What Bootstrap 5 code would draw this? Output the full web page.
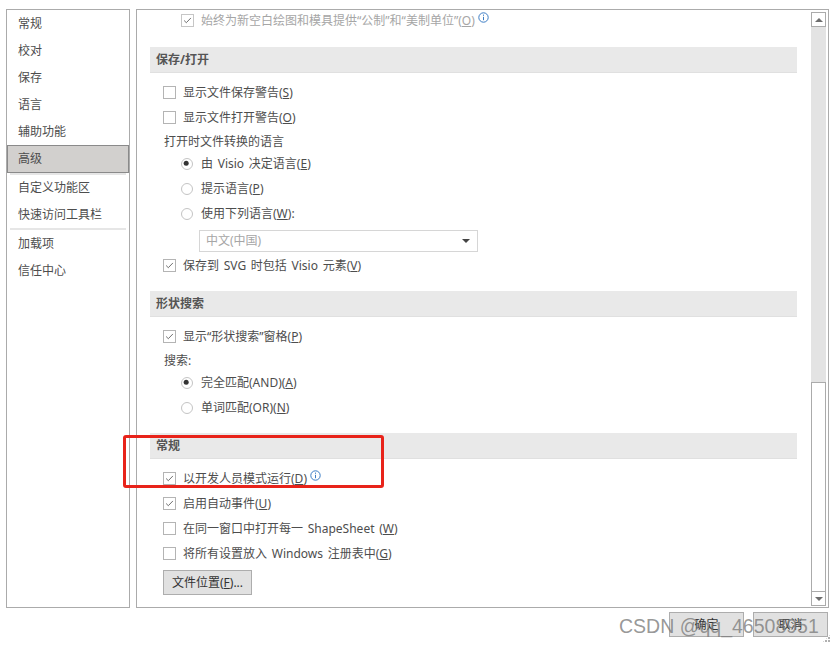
<!DOCTYPE html>
<html lang="zh-CN">
<head>
<meta charset="utf-8">
<title>高级选项</title>
<link href="https://cdn.jsdelivr.net/npm/bootstrap@5.3.0/dist/css/bootstrap.min.css" rel="stylesheet">
<style>
html,body{height:646px;overflow:hidden;background:#fff}
body{font-family:"Noto Sans","Noto Sans CJK SC",sans-serif;font-size:12px;line-height:16px;color:#4d4d4d;word-spacing:1.6px;position:relative}
.dlg-top{height:608px;padding:9px 6px 0 6px;gap:6px}
.side-pane{width:124px;border:1px solid #ababab}
.side-item{height:27px;padding-left:11px;display:flex;align-items:center}
.side-item.is-on{background:#d2d0ce;border:1px solid #8a8a8a;height:28px;padding-left:10px}
.side-sep{height:2px;background:#e6e6e6;margin:0 3px}
.sep-first{margin-bottom:-1px}
.main-pane{width:693px;border:1px solid #ababab;padding-left:13px}
.opts{width:647px}
.sec-head{height:26px;background:#e9e9e9;border-bottom:1px solid #e0e0e0;padding-left:6px;font-weight:700;color:#555;display:flex;align-items:center;margin-top:13px}
.opt-row{height:25px;display:flex;align-items:center;white-space:nowrap}
.lvl1{padding-left:13px}
.lvl2{padding-left:31px}
.lbl-row{height:23px;display:flex;align-items:center;padding-left:14px}
.first-row{height:21px}
.head-one{margin-top:16px}
.gap-top{margin-top:7px}
.tight-below{margin-bottom:-2px}
.opt-row .form-check-input{width:13px;height:13px;margin:0 7px 0 0;border:1px solid #b4b4b4;border-radius:0;background-color:#fff;box-shadow:none;opacity:1;flex:none}
.opt-row .form-check-input:checked{border-color:#b4b4b4;background-color:#fff;background-image:url("data:image/svg+xml,%3csvg xmlns='http://www.w3.org/2000/svg' viewBox='0 0 13 13'%3e%3cpath fill='none' stroke='%23555' d='M2.5 6.5l2.6 2.6 5.4-5.6'/%3e%3c/svg%3e");background-size:100%}
.opt-row .form-check-input[type=radio]{width:12px;height:12px;margin-right:8px;border-radius:50%;border-color:#c4c4c4}
.opt-row .form-check-input[type=radio]:checked{background-image:url("data:image/svg+xml,%3csvg xmlns='http://www.w3.org/2000/svg' viewBox='0 0 12 12'%3e%3ccircle cx='5' cy='5' r='3' fill='%23333'/%3e%3c/svg%3e")}
.is-dim{color:#a6a6a6}
.opt-row .is-dim-box{border-color:#c6c6c6!important}
.info-ico{width:11px;height:11px;margin:-7px 0 0 3px;flex:none}
.combo-box{width:279px;height:22px;margin:4px 0 1px 49px;border:1px solid #d6d6d6;padding:0 6px;color:#a6a6a6;display:flex;align-items:center;justify-content:space-between}
.combo-arrow{width:0;height:0;border-left:4px solid transparent;border-right:4px solid transparent;border-top:4px solid #444;margin-right:1px}
.btn.dlg-btn{--bs-btn-font-size:12px;--bs-btn-color:#333;--bs-btn-bg:#e1e1e1;--bs-btn-border-color:#adadad;--bs-btn-border-radius:0;--bs-btn-padding-y:0;--bs-btn-padding-x:0;--bs-btn-line-height:16px;height:25px}
.file-btn{width:89px;margin:4px 0 0 13px}
.foot-btn{width:75px}
.foot-bar{padding:4px 6px 0 0;gap:9px}
.scroll-col{width:15px;margin:2px 2px 1px 0;display:flex;flex-direction:column}
.sb-btn{height:15px;border:1px solid #ababab;display:flex;align-items:center;justify-content:center;background:#fff;flex:none}
.sb-track{height:355px;background:#e3e3e3;flex:none}
.sb-thumb{flex:1;border:1px solid #ababab;border-bottom:0;background:#fff}
.tri-up,.tri-dn{width:0;height:0;border-left:4px solid transparent;border-right:4px solid transparent}
.tri-up{border-bottom:4px solid #6e6e6e}
.tri-dn{border-top:4px solid #6e6e6e}
.red-mark{position:absolute;left:123px;top:435px;width:261px;height:53px;border:3px solid #e8231a;border-radius:3px;pointer-events:none}
.wm-text{position:absolute;left:619px;top:614px;font-family:"Liberation Sans",sans-serif;font-size:19.5px;line-height:24px;word-spacing:0;color:rgba(125,125,125,.8);white-space:nowrap}
.grip{position:absolute;right:3px;bottom:3px;width:9px;height:9px;background-image:radial-gradient(circle at 1px 1px,#b0b0b0 1px,transparent 1.1px);background-size:3px 3px;clip-path:polygon(100% 0,100% 100%,0 100%)}
</style>
</head>
<body>
<div class="d-flex dlg-top">
  <div class="side-pane flex-shrink-0">
    <div class="side-item">常规</div>
    <div class="side-item">校对</div>
    <div class="side-item">保存</div>
    <div class="side-item">语言</div>
    <div class="side-item">辅助功能</div>
    <div class="side-item is-on">高级</div>
    <div class="side-sep sep-first"></div>
    <div class="side-item">自定义功能区</div>
    <div class="side-item">快速访问工具栏</div>
    <div class="side-sep"></div>
    <div class="side-item">加载项</div>
    <div class="side-item">信任中心</div>
  </div>
  <div class="main-pane d-flex justify-content-between flex-shrink-0">
    <div class="opts">
      <div class="opt-row lvl2 is-dim first-row"><input class="form-check-input is-dim-box" type="checkbox" checked disabled>始终为新空白绘图和模具提供“公制”和“美制单位”(<u>O</u>)
        <svg class="info-ico" viewBox="0 0 11 11"><circle cx="5.5" cy="5.5" r="4.7" fill="none" stroke="#3b7cc4"/><path d="M5.5 2.6v1.2M5.5 4.8v3.4" stroke="#3b7cc4" fill="none"/></svg></div>
      <div class="sec-head head-one">保存/打开</div>
      <div class="opt-row lvl1 gap-top"><input class="form-check-input" type="checkbox">显示文件保存警告(<u>S</u>)</div>
      <div class="opt-row lvl1"><input class="form-check-input" type="checkbox">显示文件打开警告(<u>O</u>)</div>
      <div class="lbl-row tight-below">打开时文件转换的语言</div>
      <div class="opt-row lvl2"><input class="form-check-input" type="radio" name="r1" checked>由 Visio 决定语言(<u>E</u>)</div>
      <div class="opt-row lvl2"><input class="form-check-input" type="radio" name="r1">提示语言(<u>P</u>)</div>
      <div class="opt-row lvl2"><input class="form-check-input" type="radio" name="r1">使用下列语言(<u>W</u>):</div>
      <div class="combo-box"><span>中文(中国)</span><span class="combo-arrow"></span></div>
      <div class="opt-row lvl1"><input class="form-check-input" type="checkbox" checked>保存到 SVG 时包括 Visio 元素(<u>V</u>)</div>
      <div class="sec-head">形状搜索</div>
      <div class="opt-row lvl1 gap-top"><input class="form-check-input" type="checkbox" checked>显示“形状搜索”窗格(<u>P</u>)</div>
      <div class="lbl-row tight-below">搜索:</div>
      <div class="opt-row lvl2"><input class="form-check-input" type="radio" name="r2" checked>完全匹配(AND)(<u>A</u>)</div>
      <div class="opt-row lvl2"><input class="form-check-input" type="radio" name="r2">单词匹配(OR)(<u>N</u>)</div>
      <div class="sec-head">常规</div>
      <div class="opt-row lvl1 gap-top"><input class="form-check-input" type="checkbox" checked>以开发人员模式运行(<u>D</u>)
        <svg class="info-ico" viewBox="0 0 11 11"><circle cx="5.5" cy="5.5" r="4.7" fill="none" stroke="#3b7cc4"/><path d="M5.5 2.6v1.2M5.5 4.8v3.4" stroke="#3b7cc4" fill="none"/></svg></div>
      <div class="opt-row lvl1"><input class="form-check-input" type="checkbox" checked>启用自动事件(<u>U</u>)</div>
      <div class="opt-row lvl1"><input class="form-check-input" type="checkbox">在同一窗口中打开每一 ShapeSheet (<u>W</u>)</div>
      <div class="opt-row lvl1"><input class="form-check-input" type="checkbox">将所有设置放入 Windows 注册表中(<u>G</u>)</div>
      <button type="button" class="btn dlg-btn file-btn d-block">文件位置(<u>F</u>)...</button>
    </div>
    <div class="scroll-col">
      <div class="sb-btn"><span class="tri-up"></span></div>
      <div class="sb-track"></div>
      <div class="sb-thumb"></div>
      <div class="sb-btn"><span class="tri-dn"></span></div>
    </div>
  </div>
</div>
<div class="d-flex justify-content-end foot-bar">
  <button type="button" class="btn dlg-btn foot-btn">确定</button>
  <button type="button" class="btn dlg-btn foot-btn">取消</button>
</div>
<div class="red-mark"></div>
<div class="wm-text">CSDN @qq_46508951</div>
<div class="grip"></div>
<script src="https://cdn.jsdelivr.net/npm/bootstrap@5.3.0/dist/js/bootstrap.bundle.min.js"></script>
</body>
</html>
